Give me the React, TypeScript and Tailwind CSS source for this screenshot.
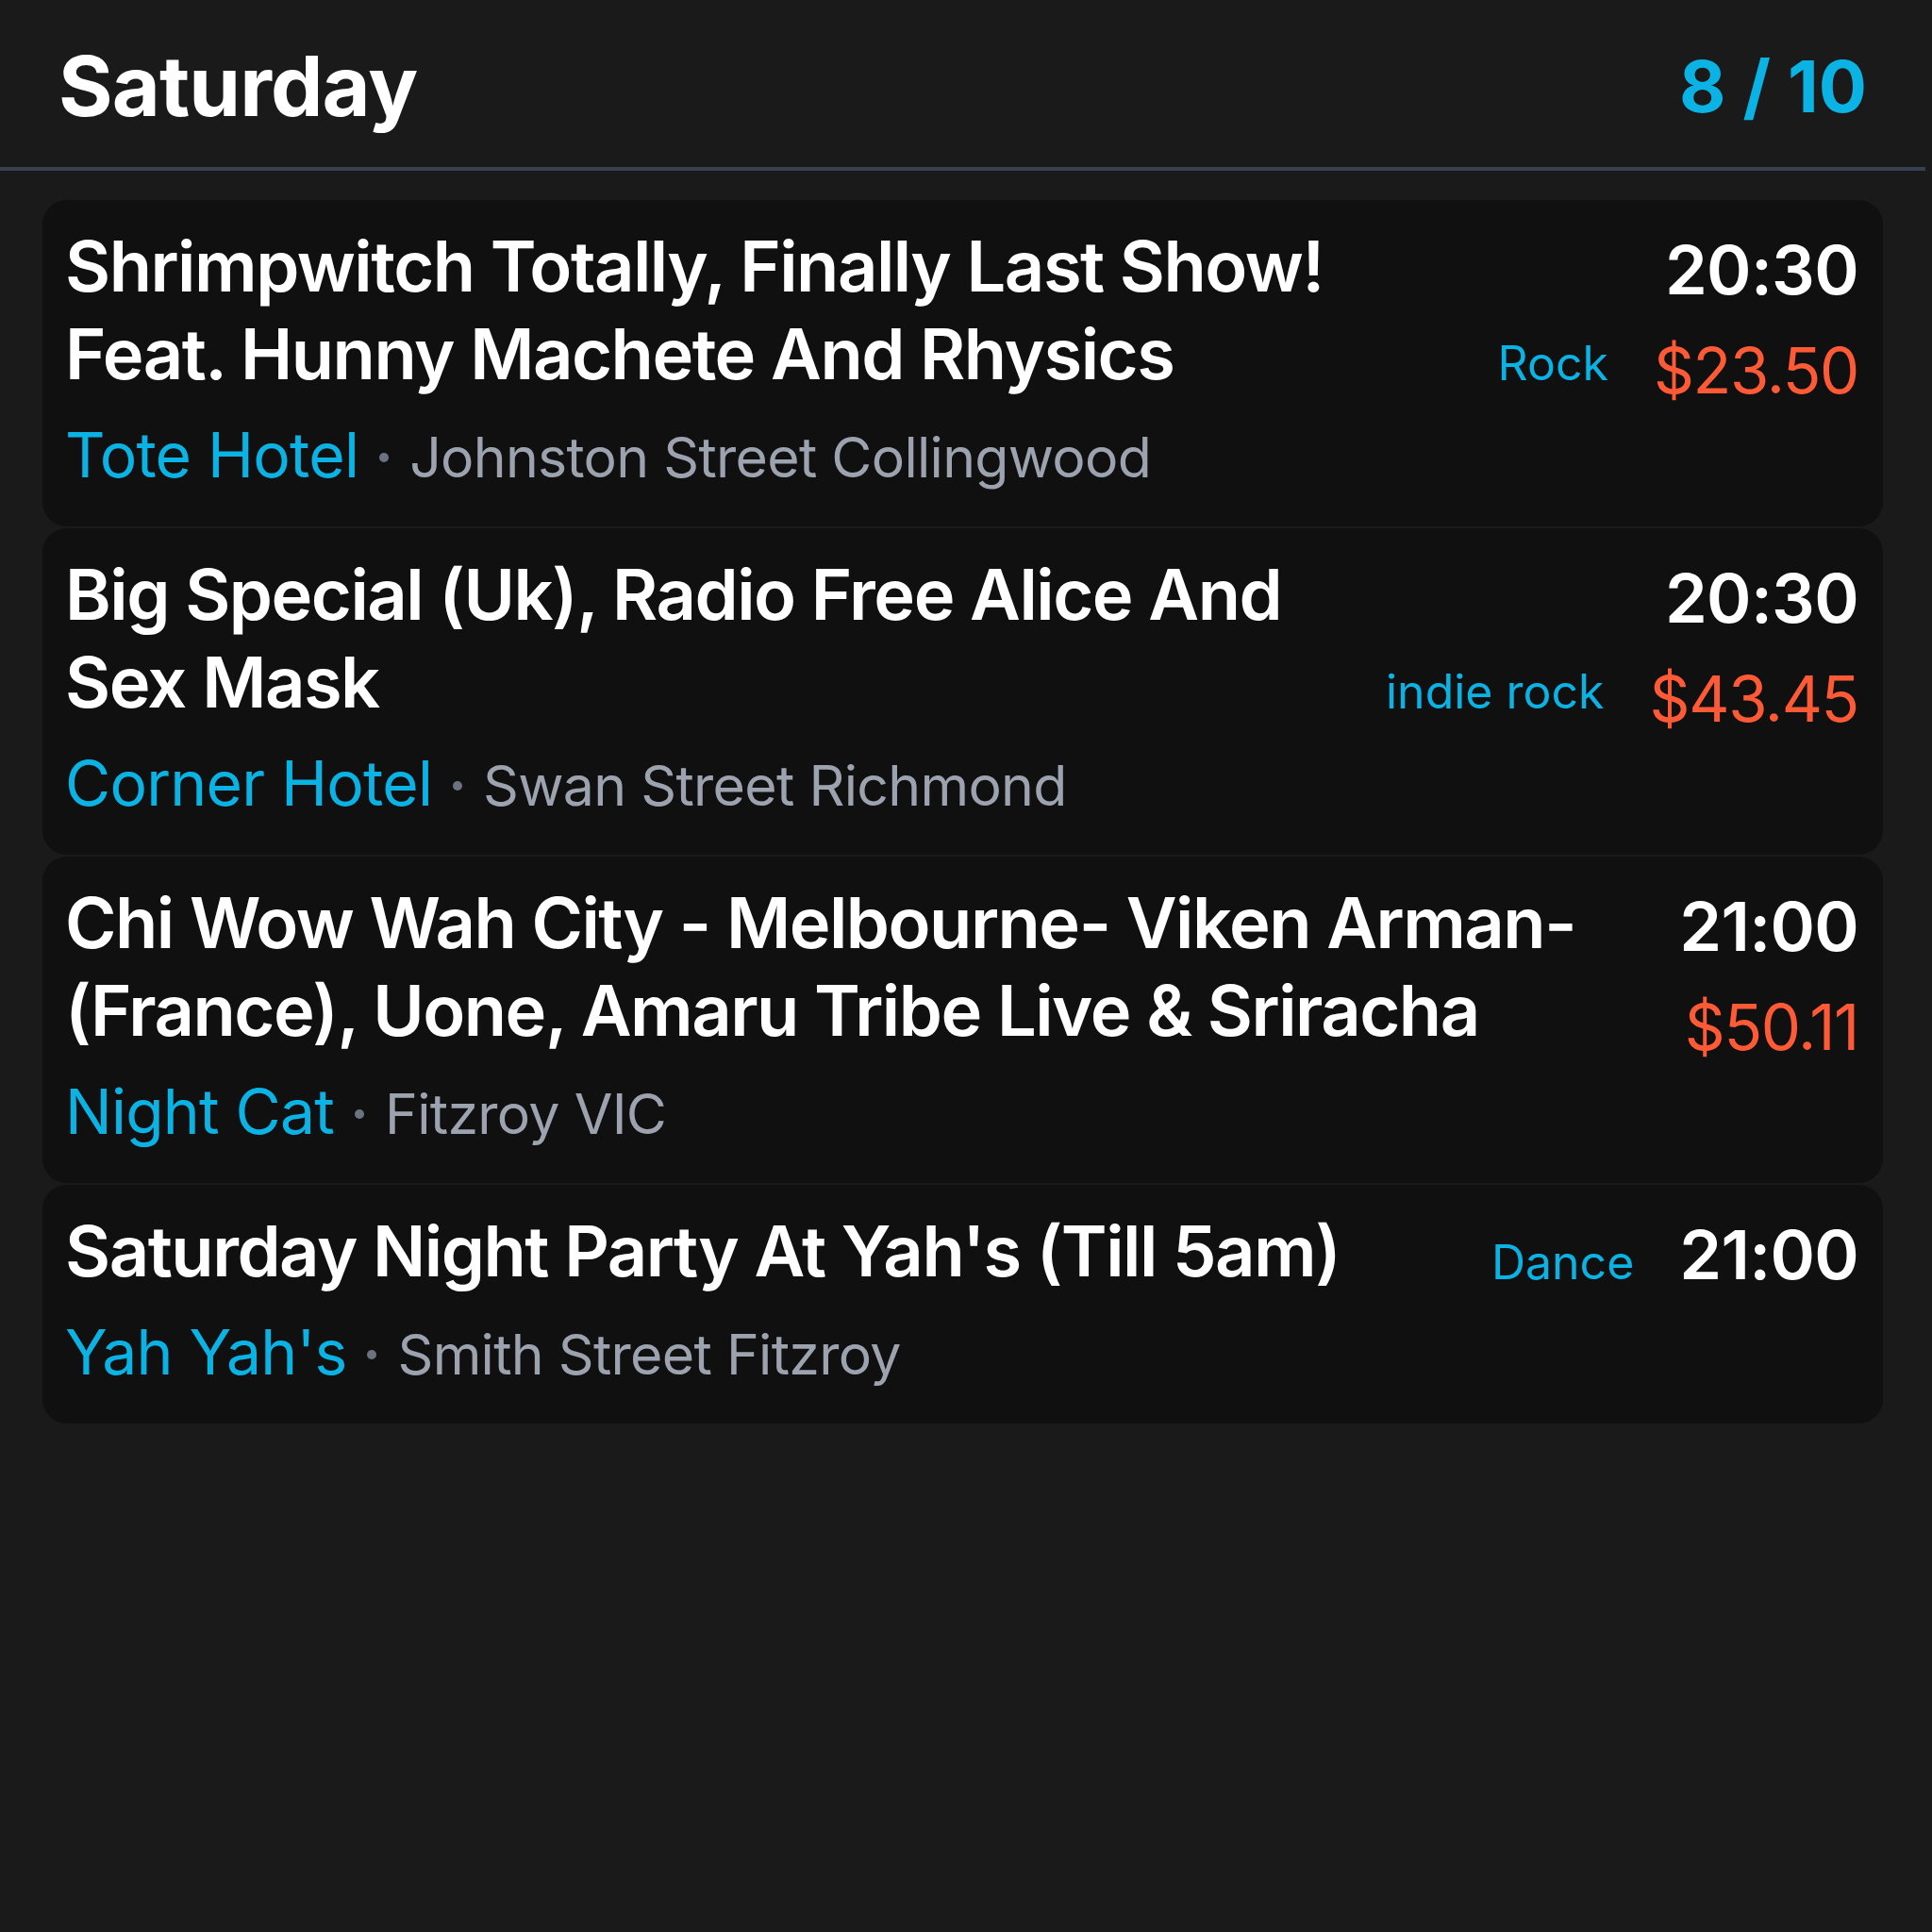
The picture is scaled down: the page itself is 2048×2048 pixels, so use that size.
type Gig = {
  title: string;
  time: string;
  venue: string;
  address: string;
  genre?: string;
  price?: string;
};

const gigs: Gig[] = [
  {
    title: "Shrimpwitch Totally, Finally Last Show! Feat. Hunny Machete And Rhysics",
    time: "20:30",
    venue: "Tote Hotel",
    address: "Johnston Street Collingwood",
    genre: "Rock",
    price: "$23.50",
  },
  {
    title: "Big Special (Uk), Radio Free Alice And Sex Mask",
    time: "20:30",
    venue: "Corner Hotel",
    address: "Swan Street Richmond",
    genre: "indie rock",
    price: "$43.45",
  },
  {
    title: "Chi Wow Wah City - Melbourne- Viken Arman- (France), Uone, Amaru Tribe Live & Sriracha",
    time: "21:00",
    venue: "Night Cat",
    address: "Fitzroy VIC",
    price: "$50.11",
  },
  {
    title: "Saturday Night Party At Yah's (Till 5am)",
    time: "21:00",
    venue: "Yah Yah's",
    address: "Smith Street Fitzroy",
    genre: "Dance",
  },
];

function GigCard({ gig }: { gig: Gig }) {
  return (
    <div className="flex gap-10 rounded-[26px] bg-[#101010] pt-6 pb-6 pl-6 pr-[26px]">
      <div className="min-w-0 flex-1">
        <h2 className="text-[74px] leading-[93px] font-semibold tracking-[-0.02em] text-white">{gig.title}</h2>
        <div className="mt-2 flex items-baseline gap-[22px] leading-[104px]">
          <span className="text-[66px] tracking-[-0.012em] text-[#0ab3e4]">{gig.venue}</span>
          <span className="inline-block h-[10px] w-[10px] -translate-y-[16px] rounded-full bg-[#6b7280]" />
          <span className="text-[59px] leading-[98px] tracking-[-0.012em] text-[#9ca3af]">{gig.address}</span>
        </div>
      </div>
      <div className="flex shrink-0 flex-col items-end">
        {gig.price ? (
          <>
            <div className="text-[72px] leading-[100px] font-semibold tracking-[-0.01em] text-white">{gig.time}</div>
            <div className="mt-[7px] flex items-center gap-12">
              {gig.genre && (
                <span className="mb-[15px] text-[50px] leading-normal text-[#0ab3e4]">{gig.genre}</span>
              )}
              <span className="text-[67px] leading-normal tracking-[-0.02em] text-[#ff5a36]">{gig.price}</span>
            </div>
          </>
        ) : (
          <div className="flex items-baseline gap-12">
            {gig.genre && <span className="text-[50px] text-[#0ab3e4]">{gig.genre}</span>}
            <span className="text-[72px] leading-[100px] font-semibold tracking-[-0.01em] text-white">{gig.time}</span>
          </div>
        )}
      </div>
    </div>
  );
}

export default function App() {
  return (
    <div className="min-h-screen bg-[#1a1a1a] [font-family:Inter,sans-serif]">
      <div className="mr-[7px]">
        <header className="flex h-[181px] items-center justify-between border-b-4 border-[#384152] px-[62px] pt-[4px]">
          <h1 className="text-[88px] font-bold tracking-[-0.01em] text-white">Saturday</h1>
          <span className="text-[76px] font-bold text-[#0ab3e4]">8 / 10</span>
        </header>
        <div className="flex flex-col gap-[2px] px-[45px] pt-[31px]">
          {gigs.map((g) => (
            <GigCard key={g.title} gig={g} />
          ))}
        </div>
      </div>
    </div>
  );
}
